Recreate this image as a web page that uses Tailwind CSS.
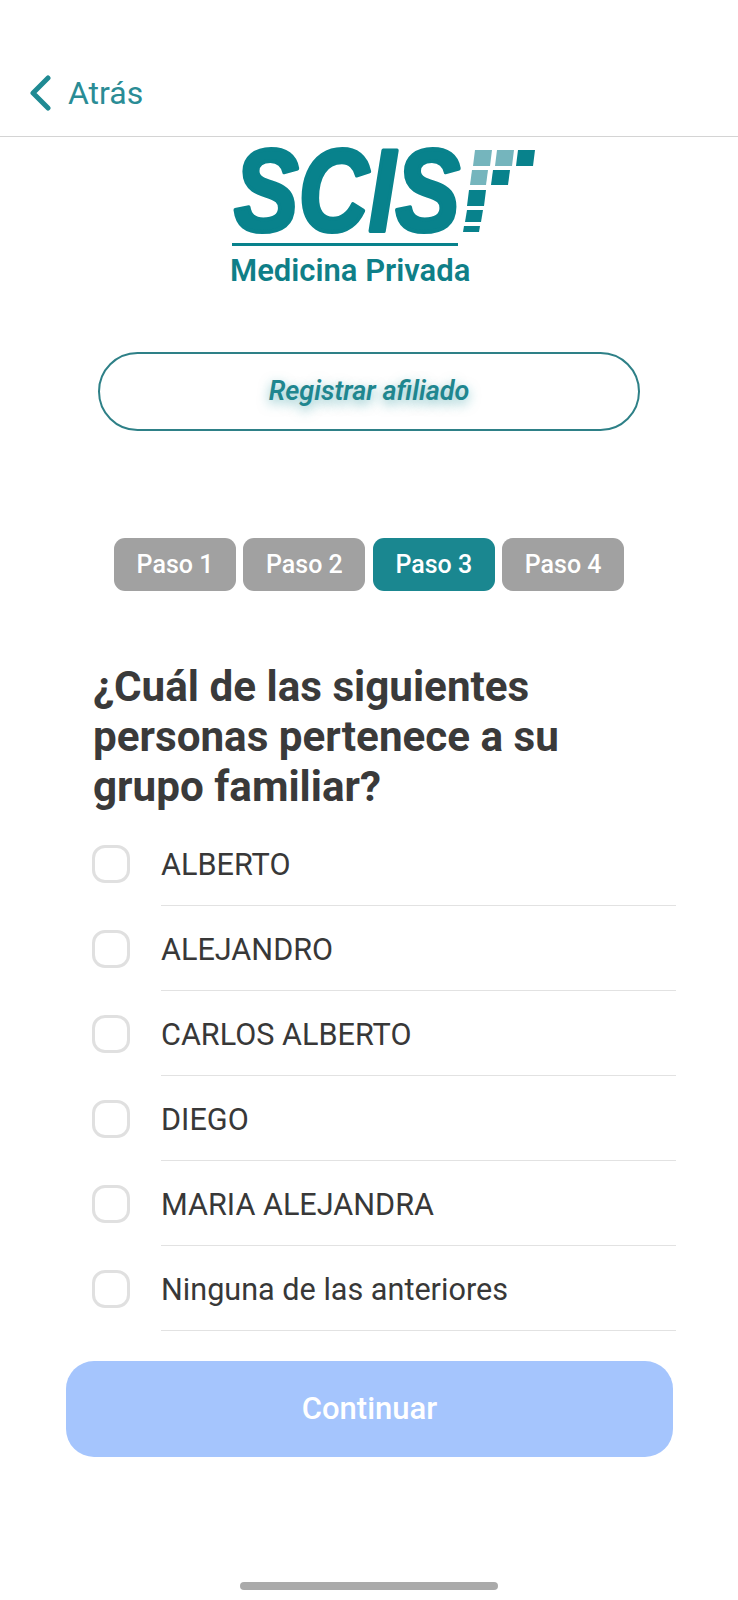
<!DOCTYPE html>
<html lang="es">
<head>
    <meta charset="UTF-8">
    <meta name="viewport" content="width=device-width, initial-scale=1.0">
    <title>Registrar afiliado</title>
    <script src="https://cdn.jsdelivr.net/npm/@tailwindcss/browser@4"></script>
</head>
<body class="bg-white font-['Roboto',sans-serif] text-[#383838]">
    <div class="relative h-[1600px] w-[738px] overflow-hidden">
        <!-- Header -->
        <header class="flex h-[137px] items-center gap-[17px] border-b border-[#d4d4d4] pl-[29px] pt-[50px]">
            <svg class="h-[36px] w-[22px]" viewBox="0 0 22 36" fill="none" stroke="#1f8a93" stroke-width="5" stroke-linecap="round" stroke-linejoin="round">
                <path d="M19 3 L4 18 L19 33"/>
            </svg>
            <span class="text-[32px] leading-none text-[#2a8c95]">Atrás</span>
        </header>

        <!-- Logo -->
        <div class="ml-[232px] mt-[9px] h-[150px] w-[310px]">
            <svg class="block overflow-visible" width="310" height="100" viewBox="0 0 310 100">
                <text x="2" y="85" font-family="Liberation Sans" font-size="117" font-weight="700" font-style="italic" fill="#08828c" stroke="#08828c" stroke-width="4" stroke-linejoin="round" textLength="226" lengthAdjust="spacingAndGlyphs">SCIS</text>
                <g fill="#75b5bd">
                    <polygon points="243,4 260,4 258,20 241,20"/>
                    <polygon points="265,4 282,4 280,20 263,20"/>
                    <polygon points="240,24 256,24 254,39 238,39"/>
                </g>
                <g fill="#08828c">
                    <polygon points="286,4 303,4 301,20 284,20"/>
                    <polygon points="261,24 278,24 276,39 259,39"/>
                    <polygon points="237,44 254,44 252,60 235,60"/>
                    <polygon points="235,64 251,64 249,76 233,76"/>
                    <polygon points="232,80 248,80 247,86 231,86"/>
                </g>
            </svg>
            <div class="-mt-[3px] h-[3px] w-[226px] bg-[#08828c]"></div>
            <div class="-ml-[2px] mt-[7px] whitespace-nowrap text-[31px] font-semibold leading-[36px] text-[#0f7f88]">Medicina Privada</div>
        </div>

        <!-- Registrar afiliado -->
        <div class="ml-[98px] mt-[56px] flex h-[79px] w-[542px] items-center justify-center rounded-full border-2 border-[#2e8087]">
            <span class="text-[27px] font-semibold italic text-[#1f868f] [text-shadow:0_4px_12px_rgba(20,140,150,0.55)]">Registrar afiliado</span>
        </div>

        <!-- Pasos -->
        <div class="ml-[114px] mt-[107px] flex gap-[7.4px]">
            <div class="flex h-[53px] w-[122px] items-center justify-center rounded-[11px] bg-[#a1a1a1] text-[25px] font-medium text-white">Paso 1</div>
            <div class="flex h-[53px] w-[122px] items-center justify-center rounded-[11px] bg-[#a1a1a1] text-[25px] font-medium text-white">Paso 2</div>
            <div class="flex h-[53px] w-[122px] items-center justify-center rounded-[11px] bg-[#1a8790] text-[25px] font-medium text-white">Paso 3</div>
            <div class="flex h-[53px] w-[122px] items-center justify-center rounded-[11px] bg-[#a1a1a1] text-[25px] font-medium text-white">Paso 4</div>
        </div>

        <!-- Pregunta -->
        <h1 class="ml-[93px] mt-[71px] w-[520px] text-[42.2px] font-bold leading-[50px] text-[#3a3a3a]">¿Cuál de las siguientes personas pertenece a su grupo familiar?</h1>

        <!-- Opciones -->
        <ul class="ml-[92px] mt-[9px] w-[584px]">
            <li class="flex h-[85px] items-center gap-[31px]">
                <span class="mt-[1px] h-[38px] w-[38px] shrink-0 rounded-[13px] border-[3px] border-[#e0e0e0]"></span>
                <span class="flex h-full flex-1 items-center border-b border-[#e2e2e2] pt-[3px] text-[30.6px]">ALBERTO</span>
            </li>
            <li class="flex h-[85px] items-center gap-[31px]">
                <span class="mt-[1px] h-[38px] w-[38px] shrink-0 rounded-[13px] border-[3px] border-[#e0e0e0]"></span>
                <span class="flex h-full flex-1 items-center border-b border-[#e2e2e2] pt-[3px] text-[30.6px]">ALEJANDRO</span>
            </li>
            <li class="flex h-[85px] items-center gap-[31px]">
                <span class="mt-[1px] h-[38px] w-[38px] shrink-0 rounded-[13px] border-[3px] border-[#e0e0e0]"></span>
                <span class="flex h-full flex-1 items-center border-b border-[#e2e2e2] pt-[3px] text-[30.6px]">CARLOS ALBERTO</span>
            </li>
            <li class="flex h-[85px] items-center gap-[31px]">
                <span class="mt-[1px] h-[38px] w-[38px] shrink-0 rounded-[13px] border-[3px] border-[#e0e0e0]"></span>
                <span class="flex h-full flex-1 items-center border-b border-[#e2e2e2] pt-[3px] text-[30.6px]">DIEGO</span>
            </li>
            <li class="flex h-[85px] items-center gap-[31px]">
                <span class="mt-[1px] h-[38px] w-[38px] shrink-0 rounded-[13px] border-[3px] border-[#e0e0e0]"></span>
                <span class="flex h-full flex-1 items-center border-b border-[#e2e2e2] pt-[3px] text-[30.6px]">MARIA ALEJANDRA</span>
            </li>
            <li class="flex h-[85px] items-center gap-[31px]">
                <span class="mt-[1px] h-[38px] w-[38px] shrink-0 rounded-[13px] border-[3px] border-[#e0e0e0]"></span>
                <span class="flex h-full flex-1 items-center border-b border-[#e2e2e2] pt-[3px] text-[30.6px]">Ninguna de las anteriores</span>
            </li>
        </ul>

        <!-- Continuar -->
        <button class="ml-[66px] mt-[30px] h-[96px] w-[607px] rounded-[28px] bg-[#a5c5fd] text-[31px] font-medium text-white">Continuar</button>

        <!-- Home indicator -->
        <div class="absolute bottom-[10px] left-[240px] h-[8px] w-[258px] rounded-full bg-[#aaaaaa]"></div>
    </div>
</body>
</html>
